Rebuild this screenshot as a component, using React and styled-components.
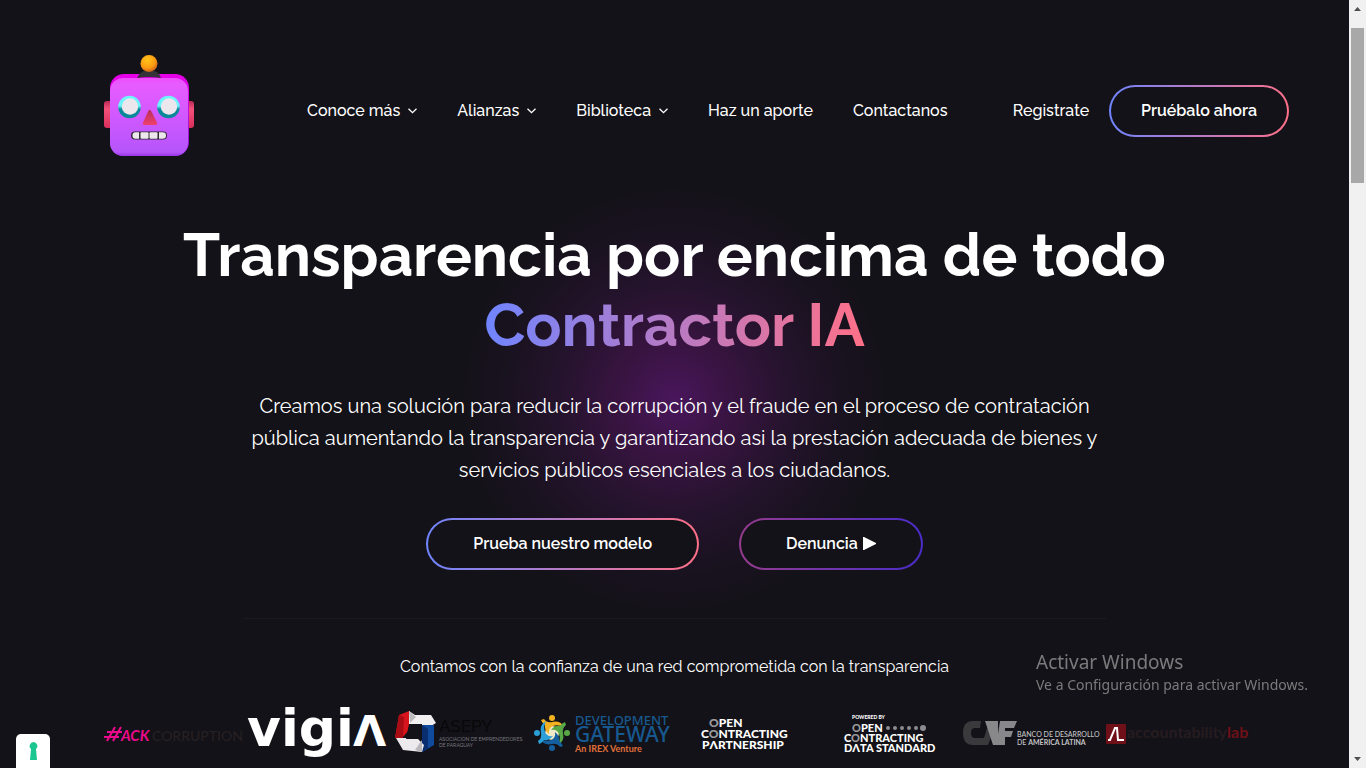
import React from "react";
import styled, { createGlobalStyle } from "styled-components";

const ink = "#131218";
const warm = "linear-gradient(90deg, #7085ff, #ff7088)";
const violet = "linear-gradient(90deg, #963b8e, #4b2dca)";

const GlobalStyle = createGlobalStyle`
  *, *::before, *::after { box-sizing: border-box; }
  body {
    margin: 0;
    background: ${ink};
    color: #fff;
    font-family: Raleway, Lato, "Open Sans", sans-serif;
    font-size: 16px;
    font-weight: 500;
    line-height: 24px;
  }
`;

const Shell = styled.div`
  display: flex;
  min-height: 100vh;
`;

const Page = styled.div`
  flex: 1;
  min-width: 0;
`;

const Header = styled.header`
  display: flex;
  align-items: center;
  padding: 51px 60px 0 104px;
`;

const Brand = styled.a`
  display: block;
  flex: none;
  line-height: 0;
`;

const Nav = styled.nav`
  display: flex;
  gap: 40px;
  margin-left: 113px;
`;

const NavLink = styled.a`
  display: inline-flex;
  align-items: center;
  gap: 8px;
  color: #fff;
  text-decoration: none;
  white-space: nowrap;
`;

const Actions = styled.div`
  display: flex;
  align-items: center;
  gap: 20px;
  margin-left: auto;
`;

const Pill = styled.button`
  height: 52px;
  padding: 0 ${(p) => (p.$wide ? 45 : 30)}px;
  border: 2px solid transparent;
  border-radius: 26px;
  background:
    linear-gradient(${ink}, ${ink}) padding-box,
    ${(p) => (p.$tone === "violet" ? violet : warm)} border-box;
  color: #fff;
  font: inherit;
  font-weight: 600;
  white-space: nowrap;
  cursor: pointer;
`;

const PlayIcon = styled.svg`
  width: 13px;
  height: 13px;
  margin-left: 1px;
  vertical-align: -1px;
`;

const Hero = styled.section`
  display: flex;
  flex-direction: column;
  align-items: center;
  padding: 49px 24px 48px;
  text-align: center;
  background: radial-gradient(
    circle 220px at 50% 229px,
    #49165c 0%,
    #37143f 28%,
    #25132d 52%,
    #19121f 78%,
    ${ink} 100%
  );
`;

const Title = styled.h1`
  margin: 0;
  font-size: 60px;
  font-weight: 700;
  line-height: 70px;
`;

const Accent = styled.span`
  display: block;
  width: fit-content;
  margin: 0 auto;
  background: ${warm};
  background-clip: text;
  -webkit-background-clip: text;
  color: transparent;
`;

const Lead = styled.p`
  max-width: 860px;
  margin: 30px 0 32px;
  font-size: 20px;
  font-weight: 400;
  line-height: 32px;
`;

const Buttons = styled.div`
  display: flex;
  gap: 40px;
`;

const Partners = styled.section`
  display: flex;
  flex-direction: column;
  align-items: center;
`;

const Divider = styled.hr`
  width: 64%;
  height: 1px;
  margin: 0;
  border: 0;
  background: #1b1a20;
`;

const PartnersLabel = styled.p`
  margin: 36px 0 28px;
  font-weight: 400;
`;

const LogoRow = styled.ul`
  display: grid;
  grid-template-columns: repeat(8, 1fr);
  align-items: center;
  width: 100%;
  margin: 0;
  padding: 0 103px;
  list-style: none;
`;

const LogoCell = styled.li`
  display: flex;
  justify-content: center;
  line-height: 0;
`;

const LogoArt = styled.svg`
  flex: none;
  overflow: visible;
`;

const Track = styled.div`
  position: sticky;
  top: 0;
  display: flex;
  flex-direction: column;
  align-items: center;
  width: 17px;
  height: 100vh;
  background: #f1f1f1;
`;

const Thumb = styled.div`
  width: 13px;
  height: 155px;
  margin: 11px 0 auto;
  background: #a8a8a8;
`;

const Arrow = styled.svg`
  width: 17px;
  height: 17px;
`;

const Watermark = styled.aside`
  position: fixed;
  right: 55px;
  bottom: 73px;
  width: 275px;
  color: #7b7b7d;
  font-family: "Segoe UI", "Noto Sans", "Open Sans", sans-serif;
  font-size: 14px;
  font-weight: 400;
  line-height: 20px;
  white-space: nowrap;
`;

const WatermarkTitle = styled.div`
  font-size: 19px;
  line-height: 26px;
`;

const ConsentTab = styled.button`
  position: fixed;
  left: 16px;
  bottom: 0;
  display: flex;
  justify-content: center;
  width: 34px;
  height: 34px;
  padding: 8px 0 0;
  border: 0;
  border-radius: 5px 5px 0 0;
  background: #fff;
  cursor: pointer;
`;

const Chevron = () => (
  <svg width="9" height="6" viewBox="0 0 9 6" fill="none" stroke="#fff" strokeWidth="1.3" aria-hidden="true">
    <path d="M0.5 0.7 4.5 4.7 8.5 0.7" />
  </svg>
);

const Robot = () => (
  <svg width="90" height="120" viewBox="0 1 90 120" role="img" aria-label="Contractor IA">
    <defs>
      <linearGradient id="face" x1="0" y1="0" x2="0" y2="1">
        <stop offset="0" stopColor="#ee4dfb" />
        <stop offset="0.08" stopColor="#e75cff" />
        <stop offset="0.55" stopColor="#cd58ff" />
        <stop offset="0.95" stopColor="#b555fb" />
        <stop offset="1" stopColor="#9a35e6" />
      </linearGradient>
      <linearGradient id="shell" x1="0" y1="0" x2="0" y2="1">
        <stop offset="0" stopColor="#e800e8" />
        <stop offset="1" stopColor="#8f1cd8" />
      </linearGradient>
      <linearGradient id="ear" x1="0" y1="0" x2="0" y2="1">
        <stop offset="0" stopColor="#b92b56" />
        <stop offset="0.3" stopColor="#f3507a" />
        <stop offset="1" stopColor="#d72f5b" />
      </linearGradient>
      <radialGradient id="bulb" cx="0.4" cy="0.3" r="0.75">
        <stop offset="0" stopColor="#ffc21a" />
        <stop offset="0.6" stopColor="#fb9c12" />
        <stop offset="1" stopColor="#c95a1c" />
      </radialGradient>
      <linearGradient id="eye" x1="0" y1="0" x2="0" y2="1">
        <stop offset="0.45" stopColor="#6cf3fb" />
        <stop offset="0.6" stopColor="#0a8798" />
      </linearGradient>
      <linearGradient id="nose" x1="0" y1="0" x2="0" y2="1">
        <stop offset="0" stopColor="#b8305a" />
        <stop offset="1" stopColor="#f03f6c" />
      </linearGradient>
    </defs>
    <rect x="0" y="51" width="9" height="27" rx="3" fill="url(#ear)" />
    <rect x="81" y="51" width="9" height="27" rx="3" fill="url(#ear)" />
    <rect x="6" y="24" width="79" height="82" rx="14" fill="url(#shell)" />
    <rect x="6" y="28" width="78" height="78" rx="13" fill="url(#face)" />
    <path d="M33 28C36 23 38 21 41 21H49C53 21 55 23 57 28Q45 26 33 28Z" fill="#35323a" />
    <circle cx="45" cy="13.500" r="8.500" fill="url(#bulb)" />
    <circle cx="25.500" cy="57" r="11.300" fill="url(#eye)" />
    <circle cx="26" cy="56.500" r="8.200" fill="#ebe7ed" />
    <circle cx="64.500" cy="57" r="11.300" fill="url(#eye)" />
    <circle cx="65" cy="56.500" r="8.200" fill="#ebe7ed" />
    <path d="M44 61.500Q45.500 58 47.500 61.500L53 72.500Q54 75 51 75H41Q38 75 39 72.500Z" fill="url(#nose)" />
    <rect x="27" y="81.500" width="36" height="8" rx="4" fill="#332b35" />
    <g fill="#ece8ec">
      <path d="M35 82.300V88.700H31.500Q28.500 88.700 28.500 85.500T31.500 82.300Z" />
      <rect x="36.500" y="82.300" width="8" height="6.400" rx="1" />
      <rect x="45.500" y="82.300" width="8" height="6.400" rx="1" />
      <path d="M55 82.300V88.700H58.500Q62 88.700 62 85.500T58.500 82.300Z" />
    </g>
  </svg>
);

const HackCorruption = () => (
  <LogoArt width="140" height="52" viewBox="0 0 140 52" fontFamily="Lato, sans-serif">
    <g stroke="#ec0a8c" strokeWidth="2" fill="none">
      <path d="M3 34 11 20M9 34 17 20M3 25H18M0 30H15" />
    </g>
    <text x="17" y="34" fontSize="15" fontWeight="700" fontStyle="italic" fill="#ec0a8c">ACK</text>
    <text x="48" y="34" fontSize="14" fill="#262022">CORRUPTION</text>
  </LogoArt>
);

const Vigia = () => (
  <LogoArt
    width="140" height="52" viewBox="0 0 140 52"
    fontFamily="'DejaVu Sans', sans-serif" fontWeight="700" fill="#fff"
  >
    <text x="0" y="39" fontSize="52">vigi</text>
    <text x="106" y="39" fontSize="43">Λ</text>
  </LogoArt>
);

const Asepy = () => (
  <LogoArt width="130" height="52" viewBox="0 0 130 52" fontFamily="Raleway, Lato, sans-serif">
    <g transform="translate(0 3)">
      <path d="M4 5 14 1V20L7 28H0Z" fill="#d8141c" />
      <path d="M4 5 9 7 8 28H0Z" fill="#a80d15" />
      <path d="M14 1 20 5H36L41 13 36 16H14Z" fill="#f1efef" />
      <path d="M14 1 15 13 21 7Z" fill="#bdbabd" />
      <path d="M27 15H39V35L27 42Z" fill="#0f4a9c" />
      <path d="M27 15 33 19V39L27 42Z" fill="#0a2f70" />
      <path d="M1 28H22L29 35 27 42 8 40Z" fill="#eceaec" />
      <path d="M20 40 27 30V42Z" fill="#b9b7bb" />
      <path d="M14 14H27V29H11Z" fill="#131218" />
    </g>
    <text x="44" y="25" fontSize="17" fill="#08080a">ASEPY</text>
    <text x="44" y="34" fontSize="5" fill="#77767c">ASOCIACIÓN DE EMPRENDEDORES</text>
    <text x="44" y="40" fontSize="5" fill="#77767c">DE PARAGUAY</text>
  </LogoArt>
);

const gatewayArms = ["#f3b321", "#58a946", "#14609f", "#2a9fd8"];
const DevelopmentGateway = () => (
  <LogoArt width="138" height="52" viewBox="0 0 138 52" fontFamily="'Noto Sans', 'Open Sans', sans-serif">
    <circle cx="18" cy="26" r="7" fill="#efe9c8" />
    {gatewayArms.map((color, i) => (
      <g key={color} transform={`rotate(${i * 90} 18 26)`}>
        <circle cx="18" cy="11" r="3" fill={color} />
        <path d="M7 13 10 12Q13 16 18 15Q26 13 30 20Q24 17 19 19Q14 21 15 27Q10 23 11 18Q8 16 7 13Z" fill={color} />
      </g>
    ))}
    <text x="41" y="18" fontSize="13" fill="#17598f">DEVELOPMENT</text>
    <text x="41" y="35" fontSize="21" fill="#17598f">GATEWAY</text>
    <text x="41" y="45" fontSize="9" fontWeight="700" fill="#e0703a" fontFamily="Lato, sans-serif">An IREX Venture</text>
  </LogoArt>
);

const OpenContracting = () => (
  <LogoArt width="90" height="52" viewBox="0 0 90 52" fontFamily="Lato, sans-serif" fontWeight="900" fontSize="12" fill="#fff">
    <text x="8" y="20"><tspan fill="#9b9a9d">O</tspan>PEN</text>
    <text x="0" y="31">C<tspan fill="#9b9a9d">O</tspan>NTRACTING</text>
    <text x="1" y="42">PΛRTNERSHIP</text>
  </LogoArt>
);

const DataStandard = () => (
  <LogoArt width="90" height="52" viewBox="0 0 90 52" fontFamily="Lato, sans-serif" fontWeight="900" fontSize="11" fill="#fff">
    <text x="8" y="12" fontSize="5">POWERED BY</text>
    <text x="8" y="25"><tspan fill="#9b9a9d">O</tspan>PEN</text>
    <text x="0" y="35">C<tspan fill="#9b9a9d">O</tspan>NTRACTING</text>
    <text x="0" y="45">DΛTA STANDARD</text>
    <g fill="#8c8b8f">
      {[44, 51, 58, 65, 72].map((x) => <circle key={x} cx={x} cy="21" r="2" />)}
      <circle cx="79" cy="21" r="3" />
    </g>
  </LogoArt>
);

const Caf = () => (
  <LogoArt width="138" height="52" viewBox="0 0 138 52" fontFamily="Lato, sans-serif">
    <path d="M18 14H10Q0 14 0 26T10 38H25L29 28 24 21 21 31H12Q8 31 8 26T12 21H17Z" fill="#3a3a3d" />
    <path d="M22 14H35V27L37 14H54L51 21H42V24H50L48 30H42V38H30Z" fill="#88888a" />
    <text x="54" y="30" fontSize="7" fill="#c4c4c6">BANCO DE DESARROLLO</text>
    <text x="54" y="38" fontSize="7" fill="#c4c4c6">DE <tspan fontWeight="700">AMÉRICA LATINA</tspan></text>
  </LogoArt>
);

const AccountabilityLab = () => (
  <LogoArt width="140" height="52" viewBox="0 0 140 52" fontFamily="Lato, sans-serif" fontSize="16">
    <rect x="1" y="17" width="20" height="20" rx="1" fill="#6f1018" />
    <path d="M3 33H5L10 21H12L13 33H19" fill="none" stroke="#fff" strokeWidth="2" />
    <text x="22" y="31" fontWeight="700" fill="#261c20">accountability<tspan fill="#6f1018">lab</tspan></text>
  </LogoArt>
);

const links = [
  ["Conoce más", true],
  ["Alianzas", true],
  ["Biblioteca", true],
  ["Haz un aporte", false],
  ["Contactanos", false],
];

const partners = [
  HackCorruption, Vigia, Asepy, DevelopmentGateway,
  OpenContracting, DataStandard, Caf, AccountabilityLab,
];

export default function App() {
  return (
    <>
      <GlobalStyle />
      <Shell>
        <Page>
          <Header>
            <Brand href="#"><Robot /></Brand>
            <Nav>
              {links.map(([label, menu]) => (
                <NavLink key={label} href="#">{label}{menu && <Chevron />}</NavLink>
              ))}
            </Nav>
            <Actions>
              <NavLink href="#">Registrate</NavLink>
              <Pill>Pruébalo ahora</Pill>
            </Actions>
          </Header>
          <main>
            <Hero>
              <Title>Transparencia por encima de todo<Accent>Contractor IA</Accent></Title>
              <Lead>
                Creamos una solución para reducir la corrupción y el fraude en el proceso de contratación
                pública aumentando la transparencia y garantizando asi la prestación adecuada de bienes y
                servicios públicos esenciales a los ciudadanos.
              </Lead>
              <Buttons>
                <Pill $wide>Prueba nuestro modelo</Pill>
                <Pill $wide $tone="violet">
                  Denuncia{" "}
                  <PlayIcon viewBox="0 0 13 13" fill="#fff" aria-hidden="true">
                    <path d="M0 0H1L13 6 13 7 1 13H0Z" />
                  </PlayIcon>
                </Pill>
              </Buttons>
            </Hero>
            <Partners>
              <Divider />
              <PartnersLabel>Contamos con la confianza de una red comprometida con la transparencia</PartnersLabel>
              <LogoRow>
                {partners.map((Logo, i) => <LogoCell key={i}><Logo /></LogoCell>)}
              </LogoRow>
            </Partners>
          </main>
        </Page>
        <Track aria-hidden="true">
          <Arrow viewBox="0 0 17 17"><path d="M5 11 8.500 7 12 11Z" fill="#505050" /></Arrow>
          <Thumb />
          <Arrow viewBox="0 0 17 17"><path d="M5 6 8.500 10 12 6Z" fill="#505050" /></Arrow>
        </Track>
      </Shell>
      <Watermark>
        <WatermarkTitle>Activar Windows</WatermarkTitle>
        Ve a Configuración para activar Windows.
      </Watermark>
      <ConsentTab aria-label="Preferencias de privacidad">
        <svg width="9" height="18" viewBox="0 0 9 18" fill="#1cc691" aria-hidden="true">
          <path d="M4.500 0A4 4 0 0 1 7 7L8 18H1L2 7A4 4 0 0 1 4.500 0Z" />
        </svg>
      </ConsentTab>
    </>
  );
}
